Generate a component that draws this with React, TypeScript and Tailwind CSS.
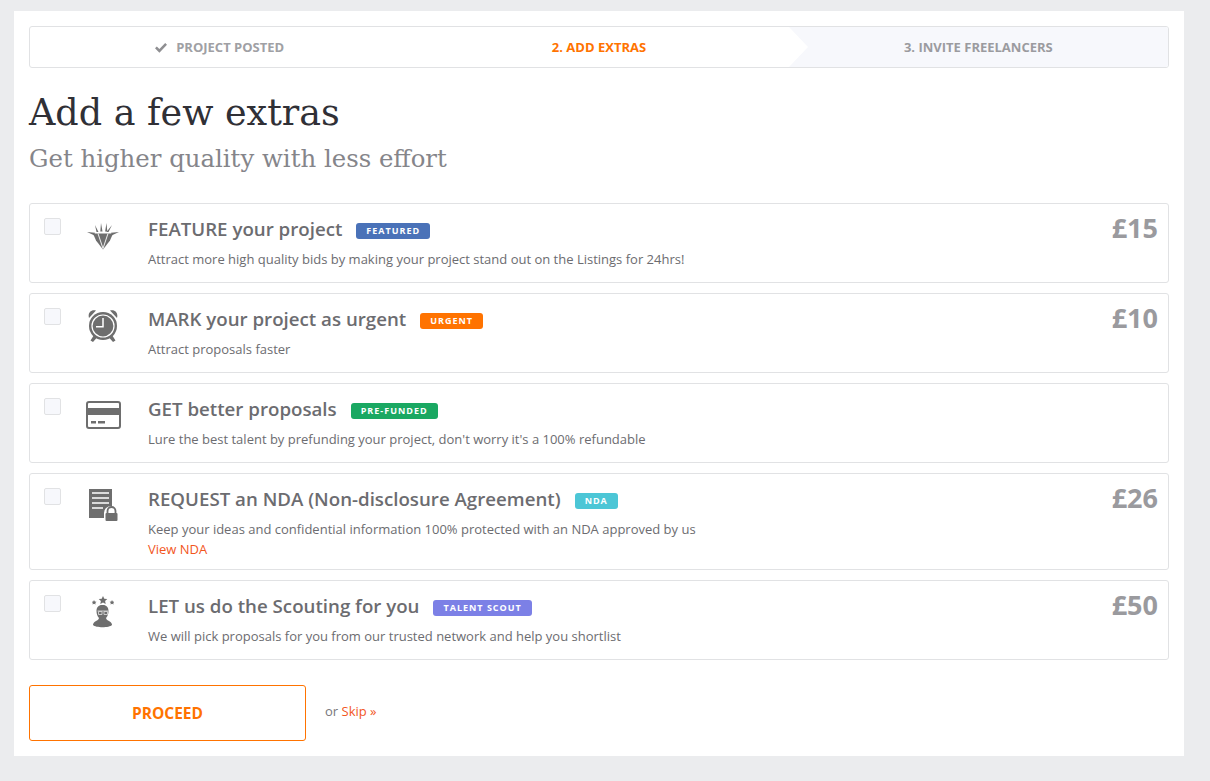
import React from "react";

const DiamondIcon = () => (
  <svg width="34" height="28" viewBox="0 0 34 28" fill="#6e6e6e">
    <path d="M7 11.500h20l-3 7-7 9-7-9z" />
    <path d="M12 11.500l5 15 5-15" fill="none" stroke="#fff" strokeWidth="0.900" />
    <path d="M9 3l3.500 7h-2zM15 1l1.500 8.500h-2.200zM20.500 1l.8 8.500h-2.200zM26 3l-3.500 7h-2zM1 10l8 .8-1 2.500zM33 10l-8 .8 1 2.500z" />
  </svg>
);

const ClockIcon = () => (
  <svg width="30" height="33" viewBox="0 0 30 33" fill="#6e6e6e">
    <path d="M1 9C-.5 4 3 0 8 1.500zM29 9c1.500-5-2-9-7-7.500z" />
    <path d="M6 26l-3.500 5.500L5 33l4-4.500zM24 26l3.500 5.500L25 33l-4-4.500z" />
    <circle cx="15" cy="17" r="14" />
    <circle cx="15" cy="17" r="11" fill="none" stroke="#fff" strokeWidth="1.200" />
    <path d="M15 9v8.700H8" fill="none" stroke="#fff" strokeWidth="1.500" />
  </svg>
);

const CardIcon = () => (
  <svg width="35" height="28" viewBox="0 0 35 28" fill="#6e6e6e">
    <rect x="1" y="1" width="33" height="26" rx="2" fill="none" stroke="#6e6e6e" strokeWidth="2" />
    <rect x="1" y="7" width="33" height="7" />
    <rect x="5" y="20" width="5" height="2.500" />
    <rect x="12" y="20" width="7" height="2.500" />
  </svg>
);

const NdaIcon = () => (
  <svg width="29" height="32" viewBox="0 0 29 32" fill="#6e6e6e">
    <path d="M0 0h23v17a7 7 0 0 0-8 7v5H0z" />
    <path d="M3 4h17M3 9h17M3 14h17M3 19h11" stroke="#fff" strokeWidth="1.500" />
    <path d="M18.500 24v-2a4 4 0 0 1 8 0v2" fill="none" stroke="#6e6e6e" strokeWidth="1.800" />
    <rect x="16.500" y="24" width="12" height="8" rx="1" />
  </svg>
);

const ScoutIcon = () => (
  <svg width="22" height="32" viewBox="0 0 22 32" fill="#6e6e6e">
    <path d="M11 0l1.300 2.700 3 .3-2.200 2 .6 3-2.700-1.500L8.300 8l.6-3-2.200-2 3-.3z" />
    <path d="M2 4l.8 1.500 1.700.2-1.200 1.200.3 1.700L2 7.800l-1.500.8.300-1.700L-.4 5.700l1.700-.2zM20 4l.8 1.500 1.700.2-1.200 1.200.3 1.700-1.600-.8-1.500.8.300-1.700-1.200-1.200 1.700-.2z" />
    <path d="M11 9c3.500 0 5.500 2.500 5.500 6 0 3-1 5.500-2.500 7 .2 2 2.500 2.500 4.500 4 1 .8 1.500 2 1.500 3-2.500 3-16.500 3-19 0 0-1 .5-2.200 1.500-3 2-1.500 4.300-2 4.500-4-1.500-1.500-2.500-4-2.500-7 0-3.500 2-6 5.500-6z" />
    <path d="M5.500 15h11M6.500 15.500h3.500v3H6.500zM12 15.500h3.500v3H12z" fill="none" stroke="#d5d5d5" strokeWidth="0.900" />
  </svg>
);

const extras = [
  {
    title: "FEATURE your project",
    badge: "FEATURED",
    badgeClass: "bg-[#4a72b8]",
    desc: "Attract more high quality bids by making your project stand out on the Listings for 24hrs!",
    price: "£15",
    icon: <DiamondIcon />,
    iconClass: "mt-[4px]",
  },
  {
    title: "MARK your project as urgent",
    badge: "URGENT",
    badgeClass: "bg-[#ff7300]",
    desc: "Attract proposals faster",
    price: "£10",
    icon: <ClockIcon />,
    iconClass: "mt-[1px]",
  },
  {
    title: "GET better proposals",
    badge: "PRE-FUNDED",
    badgeClass: "bg-[#1aa862]",
    desc: "Lure the best talent by prefunding your project, don't worry it's a 100% refundable",
    icon: <CardIcon />,
    iconClass: "mt-[3px]",
  },
  {
    title: "REQUEST an NDA (Non-disclosure Agreement)",
    badge: "NDA",
    badgeClass: "bg-[#4cc6d6]",
    desc: "Keep your ideas and confidential information 100% protected with an NDA approved by us",
    price: "£26",
    link: "View NDA",
    icon: <NdaIcon />,
    iconClass: "mt-[1px]",
  },
  {
    title: "LET us do the Scouting for you",
    badge: "TALENT SCOUT",
    badgeClass: "bg-[#7c80e6]",
    desc: "We will pick proposals for you from our trusted network and help you shortlist",
    price: "£50",
    icon: <ScoutIcon />,
    iconClass: "mt-[1px]",
  },
];

export default function App() {
  return (
    <div className="min-h-[781px] bg-[#ebecee] pt-[11px] pl-[14px] font-['Open_Sans',sans-serif]">
      <div className="w-[1170px] h-[745px] bg-white px-[15px] pt-[15px]">
        <div className="relative grid grid-cols-3 h-[42px] border border-[#e1e2e4] rounded-[3px] overflow-hidden text-[13px] font-bold">
          <div className="flex items-center justify-center gap-[9px] pt-[1px] text-[#a0a0a4]">
            <svg width="12" height="10" viewBox="0 0 12 10" fill="#8f8f92">
              <path d="M0 5.300l1.800-1.800L4.400 6 10.200 0 12 1.800 4.400 9.700z" />
            </svg>
            PROJECT POSTED
          </div>
          <div className="flex items-center justify-center pt-[1px] text-[#ff7300]">2. ADD EXTRAS</div>
          <div className="relative flex items-center justify-center pt-[1px] bg-[#f7f8fc] text-[#9b9b9f]">
            <svg className="absolute left-0 top-0" width="19" height="40" viewBox="0 0 19 40" fill="#fff">
              <path d="M0 0L19 20 0 40z" />
            </svg>
            3. INVITE FREELANCERS
          </div>
        </div>

        <h1 className="mt-[21px] text-[36.5px] leading-[48px] text-[#303036] font-['DejaVu_Serif',serif]">
          Add a few extras
        </h1>
        <h2 className="mt-[2px] text-[24.4px] leading-[40px] font-light text-[#85858a] font-['DejaVu_Serif',serif]">
          Get higher quality with less effort
        </h2>

        <div className="mt-[24px] flex flex-col gap-[10px]">
          {extras.map((item) => (
            <div
              key={item.title}
              className="flex min-h-[80px] border border-[#e1e2e4] rounded-[3px] pl-[14px] pr-[10px] pt-[14px] pb-[10px]"
            >
              <div className="w-[17px] h-[17px] shrink-0 bg-[#f7f8fc] border border-[#e1e2e4] rounded-[2px]" />
              <div className="w-[87px] shrink-0 pr-[3px] flex justify-center items-start">
                <div className={item.iconClass}>{item.icon}</div>
              </div>
              <div className="flex-1">
                <div className="flex items-center h-[24px] -mt-[1px]">
                  <span className="text-[18.7px] font-semibold text-[#6c6c70]">{item.title}</span>
                  <span
                    className={`ml-[14px] mt-[3px] h-[16px] px-[10px] flex items-center rounded-[3px] text-[9px] font-bold tracking-[1px] text-white ${item.badgeClass}`}
                  >
                    {item.badge}
                  </span>
                </div>
                <p className="mt-[8px] text-[13px] leading-[20px] text-[#6c6c70]">{item.desc}</p>
                {item.link && <p className="text-[13px] leading-[20px] text-[#f2561d]">{item.link}</p>}
              </div>
              {item.price && (
                <div className="-mt-[5px] text-[27px] leading-[30px] font-bold text-[#9a9a9e]">{item.price}</div>
              )}
            </div>
          ))}
        </div>

        <div className="mt-[25px] flex items-center">
          <button className="w-[277px] h-[56px] pt-[2px] border border-[#ff7300] rounded-[3px] text-[15.5px] font-bold text-[#ff7300]">
            PROCEED
          </button>
          <span className="ml-[19px] mb-[3px] text-[13px] text-[#77777b]">
            or <span className="text-[#f2561d]">Skip »</span>
          </span>
        </div>
      </div>
    </div>
  );
}
